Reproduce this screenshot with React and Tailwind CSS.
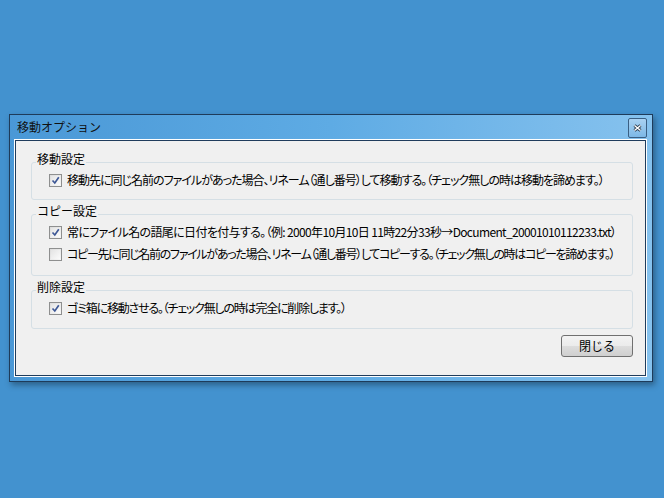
const font = { fontFamily: '"Noto Sans CJK JP", "Noto Sans", sans-serif' }

function Check({ checked }) {
  return (
    <span className="w-[13px] h-[13px] shrink-0 border border-[#8e8f8f] bg-gradient-to-br from-[#dcdcdc] to-[#f7f7f7] p-[1px] flex">
      <span className="flex-1 bg-gradient-to-br from-[#e4e4e4] to-[#fbfbfb] flex items-center justify-center">
        {checked && (
          <svg width="9" height="9" viewBox="0 0 9 9">
            <path d="M1.5 4.5 L3.8 7 L7.8 1.3" fill="none" stroke="#3e5896" strokeWidth="1.7" />
          </svg>
        )}
      </span>
    </span>
  )
}

function Row({ checked, tracking, children }) {
  return (
    <div className="h-[22px] flex items-center gap-[5px] min-w-0">
      <Check checked={checked} />
      <span className={`leading-[14px] whitespace-nowrap [font-feature-settings:'palt'] ${tracking}`}>{children}</span>
    </div>
  )
}

function Group({ title, pb, children }) {
  return (
    <div className="flex flex-col min-w-0">
      <div className="relative z-10 ml-[5px] w-fit bg-[#f0f0f0] px-[1px] leading-[14px]">{title}</div>
      <div className={`-mt-[4px] border border-[#d5dfe5] rounded-[3px] pl-[17px] pt-[6px] overflow-hidden ${pb}`}>
        {children}
      </div>
    </div>
  )
}

export default function App() {
  return (
    <div className="w-[664px] h-[498px] bg-[#4392cf] pt-[114px] pl-[9px] overflow-hidden text-[12px] text-black" style={font}>
      <div className="w-[644px] h-[268px] border border-[#1e3b5a] bg-gradient-to-r from-[#4a98d6] via-[#5eabe4] to-[#86c2ee] pl-[4px] pr-[5px] pb-[4px] flex flex-col shadow-[2px_3px_6px_rgba(0,0,0,0.35)]">
        <div className="h-[24px] flex justify-between">
          <span className="pl-[3px] pt-[4px] leading-[16px] text-[12px] text-[#111]">移動オプション</span>
          <button className="mt-[3px] w-[19px] h-[20px] border border-[#3a5f83] rounded-[2px] bg-gradient-to-b from-[#a9d2f2] to-[#7cb8e6] flex items-center justify-center">
            <svg width="9" height="8" viewBox="0 0 9 8">
              <path d="M1.5 1.5 L7.5 6.5 M7.5 1.5 L1.5 6.5" stroke="#2c3e50" strokeWidth="3" />
              <path d="M1.5 1.5 L7.5 6.5 M7.5 1.5 L1.5 6.5" stroke="#ffffff" strokeWidth="1.4" />
            </svg>
          </button>
        </div>
        <div className="flex-1 min-h-0 border border-white flex">
          <div className="flex-1 min-w-0 border border-[#1f3c5c] bg-[#f0f0f0] pl-[15px] pr-[12px] pt-[11px] flex flex-col gap-[4px]">
            <Group title="移動設定" pb="pb-[8px]">
              <Row checked tracking="tracking-[-1px]">移動先に同じ名前のファイルがあった場合、リネーム（通し番号）して移動する。（チェック無しの時は移動を諦めます。）</Row>
            </Group>
            <Group title="コピー設定" pb="pb-[10px]">
              <Row checked tracking="tracking-[-0.65px]">常にファイル名の語尾に日付を付与する。（例: 2000年10月10日 11時22分33秒→Document_20001010112233.txt）</Row>
              <Row tracking="tracking-[-1.3px]">コピー先に同じ名前のファイルがあった場合、リネーム（通し番号）してコピーする。（チェック無しの時はコピーを諦めます。）</Row>
            </Group>
            <Group title="削除設定" pb="pb-[9px]">
              <Row checked tracking="tracking-[-1.2px]">ゴミ箱に移動させる。（チェック無しの時は完全に削除します。）</Row>
            </Group>
            <div className="flex justify-end mt-[2px]">
              <button className="w-[72px] h-[22px] border border-[#707070] rounded-[3px] bg-[linear-gradient(#f3f3f3_0%,#ebebeb_50%,#dddddd_51%,#cfcfcf_100%)] leading-[14px] text-[12px]">
                閉じる
              </button>
            </div>
          </div>
        </div>
      </div>
    </div>
  )
}
